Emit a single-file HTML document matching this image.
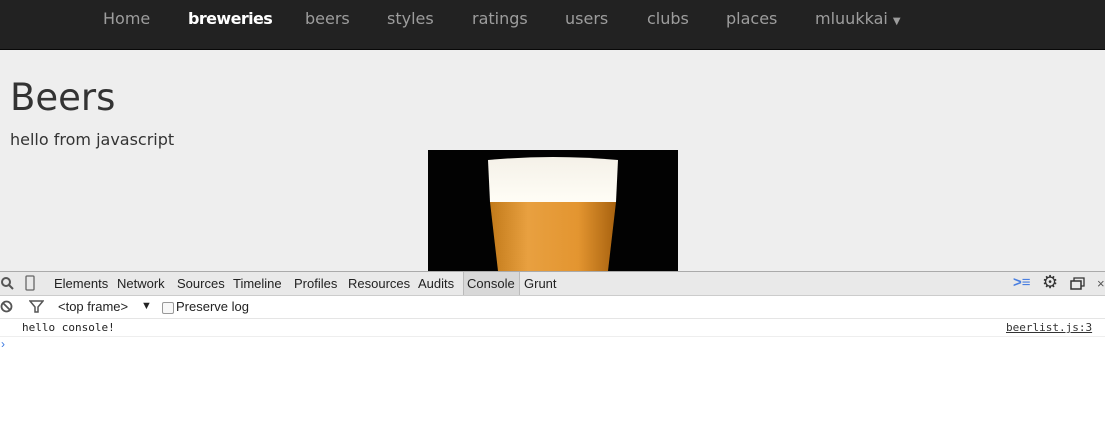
<!DOCTYPE html>
<html><head><style>
body{margin:0;width:1105px;height:434px;overflow:hidden;background:#fff;font-family:"DejaVu Sans","Liberation Sans",sans-serif;position:relative}
.nav{position:absolute;left:0;top:0;width:1105px;height:49px;background:#222;border-bottom:1px solid #080808}
.nav span{position:absolute;top:9px;font-size:16px;color:#9d9d9d}
.page{position:absolute;top:50px;left:0;width:1105px;height:221px;background:#eee}
h1{position:absolute;left:10px;top:76px;margin:0;font-weight:normal;font-size:37px;color:#333}
.hello{position:absolute;left:10px;top:130px;font-size:16px;color:#333}
.dt{position:absolute;top:271px;left:0;width:1105px;height:23px;background:#e9e9e9;border-top:1px solid #aaa;border-bottom:1px solid #ccc;font-family:"Liberation Sans",sans-serif;font-size:13px;color:#222}
.dt span{position:absolute;top:4px}
.fb{position:absolute;top:296px;left:0;width:1105px;height:22px;border-bottom:1px solid #e5e5e5;font-family:"Liberation Sans",sans-serif;font-size:13px;color:#222}
.line{position:absolute;top:319px;left:0;width:1105px;height:17px;border-bottom:1px solid #eee;font-family:"DejaVu Sans Mono","Liberation Mono",monospace;font-size:11px;color:#222}
</style></head><body>
<div class="nav">
<span style="left:103px">Home</span>
<span style="left:188px;color:#fff;font-weight:bold;letter-spacing:-0.6px">breweries</span>
<span style="left:305px">beers</span>
<span style="left:387px">styles</span>
<span style="left:472px">ratings</span>
<span style="left:565px">users</span>
<span style="left:647px">clubs</span>
<span style="left:726px">places</span>
<span style="left:815px">mluukkai <span style="position:static;font-size:10px">▼</span></span>
</div>
<div class="page"></div>
<h1>Beers</h1>
<div class="hello">hello from javascript</div>
<svg style="position:absolute;left:428px;top:150px" width="250" height="121" viewBox="0 0 250 121">
<defs><linearGradient id="b" x1="0" x2="1"><stop offset="0" stop-color="#c27a1a"/><stop offset=".3" stop-color="#e8a040"/><stop offset=".7" stop-color="#e39530"/><stop offset="1" stop-color="#a8620f"/></linearGradient>
<linearGradient id="f" x1="0" y1="0" x2="0" y2="1"><stop offset="0" stop-color="#f4f1e8"/><stop offset="1" stop-color="#fffdf6"/></linearGradient></defs>
<rect width="250" height="121" fill="#020202"/>
<path d="M60 10 Q125 4 190 10 L188 52 L62 52 Z" fill="url(#f)"/>
<path d="M62 52 L188 52 L180 121 L70 121 Z" fill="url(#b)"/>
</svg>
<div class="dt">
<svg style="position:absolute;left:1px;top:5px" width="13" height="13"><circle cx="5" cy="5" r="4" fill="none" stroke="#555" stroke-width="2"/><path d="M8 8 L12 12" stroke="#555" stroke-width="2"/></svg>
<svg style="position:absolute;left:25px;top:3px" width="10" height="16"><rect x="1" y="1" width="8" height="14" rx="1" fill="none" stroke="#666" stroke-width="1.3"/></svg>
<span style="left:54px">Elements</span><span style="left:117px">Network</span><span style="left:177px">Sources</span><span style="left:233px">Timeline</span><span style="left:294px">Profiles</span><span style="left:348px">Resources</span><span style="left:418px">Audits</span>
<div style="position:absolute;left:463px;top:0;width:55px;height:23px;background:#d8d8d8;border-left:1px solid #bbb;border-right:1px solid #bbb"></div>
<span style="left:467px">Console</span><span style="left:524px">Grunt</span>
<span style="left:1013px;color:#4a7fe0;font-weight:bold;top:2px;font-size:15px">&gt;≡</span>
<span style="left:1042px;top:0;font-size:18px;color:#333">⚙</span>
<svg style="position:absolute;left:1070px;top:5px" width="16" height="14"><rect x="1" y="4" width="10" height="8" fill="none" stroke="#333" stroke-width="1.5"/><path d="M4 4V1H14V9H11" fill="none" stroke="#333" stroke-width="1.3"/></svg>
<span style="left:1097px;color:#555">×</span>
</div>
<div class="fb">
<svg style="position:absolute;left:0;top:4px" width="13" height="13"><circle cx="6.5" cy="6.5" r="5" fill="none" stroke="#555" stroke-width="1.8"/><path d="M3 3L10 10" stroke="#555" stroke-width="1.8"/></svg>
<svg style="position:absolute;left:29px;top:4px" width="15" height="13"><path d="M1 1H14L9 7V12H6V7Z" fill="none" stroke="#555" stroke-width="1.5"/></svg>
<span style="position:absolute;left:58px;top:3px">&lt;top frame&gt;</span>
<span style="position:absolute;left:141px;top:4px;font-size:11px">▼</span>
<div style="position:absolute;left:162px;top:6px;width:10px;height:10px;border:1px solid #999;border-radius:2px;background:#f8f8f8"></div>
<span style="position:absolute;left:176px;top:3px">Preserve log</span>
</div>
<div class="line"><span style="position:absolute;left:22px;top:2px">hello console!</span><span style="position:absolute;left:1006px;top:2px;text-decoration:underline;color:#333">beerlist.js:3</span></div>
<span style="position:absolute;left:1px;top:337px;color:#3a78e0;font-size:12px;font-family:'Liberation Sans',sans-serif">›</span>
</body></html>
